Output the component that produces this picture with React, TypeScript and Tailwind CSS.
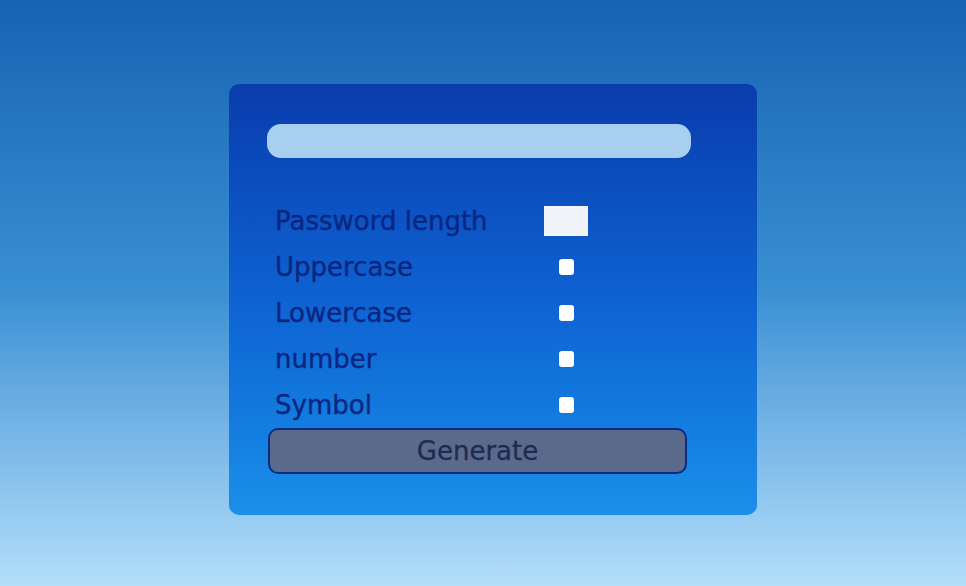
import React from "react"
import {useState} from 'react'

const rows = ['Uppercase', 'Lowercase', 'number', 'Symbol']

export default function App() {
  const [length, setLength] = useState('');
  const [password, setPassword] = useState('');

  return (
    <div className="min-h-[586px] w-full bg-gradient-to-b from-[#1663b2] via-[#3a90d3] to-[#b3defa] pl-[229px] pt-[84px] font-['DejaVu_Sans',sans-serif]">
      <div className="w-[528px] h-[431px] rounded-[10px] bg-gradient-to-b from-[#0a3cad] via-[#0f62d2] to-[#1b8fe9] px-[38px] pt-[40px]">
        <input
          type="text"
          value={password}
          readOnly
          className="block h-[34px] w-[424px] rounded-[14px] bg-[#a9cff0] outline-none"
        />

        <div className="mt-[40px]">
          <div className="grid h-[46px] grid-cols-[269px_44px] items-center pl-[8px]">
            <label className="text-[26px] text-[#0a2680] [-webkit-text-stroke:0.4px_#0a2680]">Password length</label>
            <input
              type="text"
              value={length}
              onChange={(e) => setLength(e.target.value)}
              className="h-[30px] w-[44px] bg-[#f1f4f8] outline-none"
            />
          </div>
          {rows.map((row) => (
            <div key={row} className="grid h-[46px] grid-cols-[269px_44px] items-center pl-[8px]">
              <label className="text-[26px] text-[#0a2680] [-webkit-text-stroke:0.4px_#0a2680]">{row}</label>
              <div className="flex justify-center">
                <span className="block h-[16px] w-[15px] rounded-[3px] bg-white"></span>
              </div>
            </div>
          ))}
        </div>

        <button
          type="button"
          className="flex h-[46px] w-[419px] items-center justify-center rounded-[10px] border-2 border-[#0b2a86] bg-[#5b6a8b] ml-[1px] text-[26px] text-[#1d2b55] [-webkit-text-stroke:0.3px_#1d2b55]"
        >
          Generate
        </button>
      </div>
    </div>
  )
}
